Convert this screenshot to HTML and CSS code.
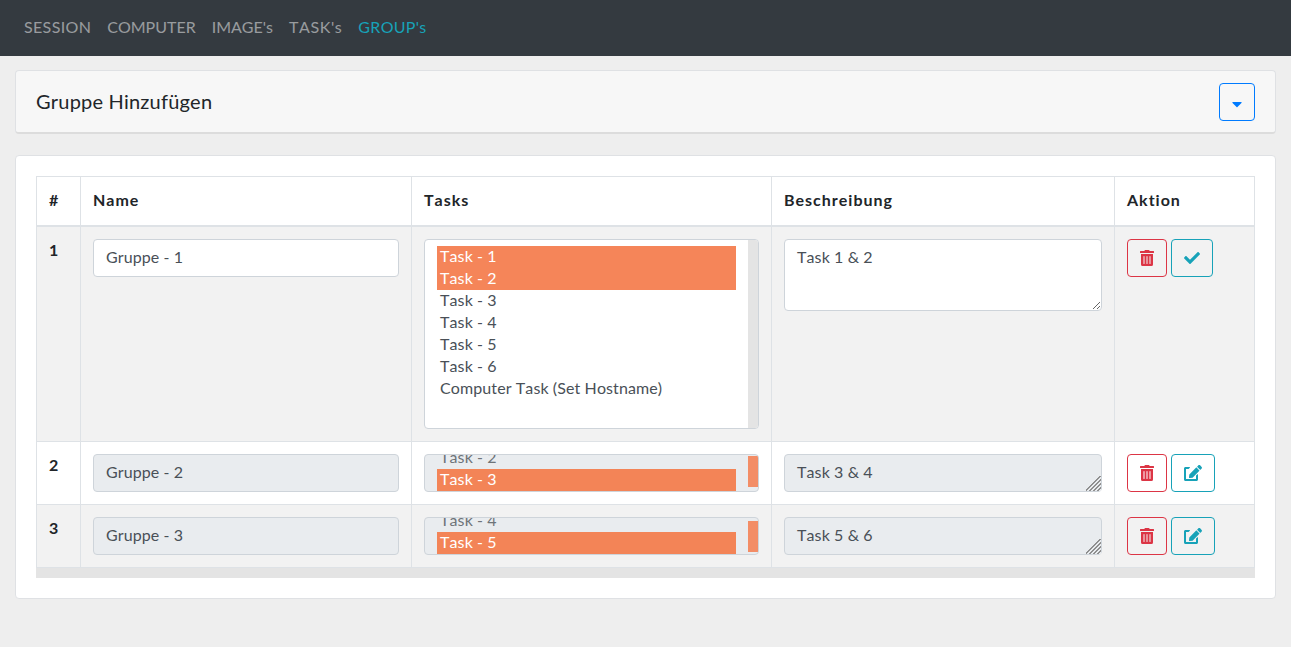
FILE: index.html
```html
<!DOCTYPE html>
<html lang="de">
<head>
<meta charset="utf-8">
<title>Gruppen</title>
<link rel="stylesheet" href="styles.css">
</head>
<body>
<nav class="navbar">
  <a class="nav-link nav-session" href="#">SESSION</a>
  <a class="nav-link" href="#">COMPUTER</a>
  <a class="nav-link" href="#">IMAGE's</a>
  <a class="nav-link nav-task" href="#">TASK's</a>
  <a class="nav-link nav-group active" href="#">GROUP's</a>
</nav>
<main class="content">
  <section class="card card-head">
    <h5 class="card-title">Gruppe Hinzufügen</h5>
    <button class="btn btn-blue btn-toggle" type="button" aria-label="Aufklappen">
      <svg class="icon-caret" viewBox="0 0 320 512"><path d="M31.3 192h257.3c17.8 0 26.7 21.5 14.1 34.1L174.1 354.8c-7.8 7.8-20.5 7.8-28.3 0L17.2 226.1C4.6 213.5 13.5 192 31.3 192z"/></svg>
    </button>
  </section>
  <section class="card card-body">
    <table class="table">
      <thead>
        <tr>
          <th class="col-num">#</th>
          <th class="col-name">Name</th>
          <th class="col-tasks">Tasks</th>
          <th class="col-desc">Beschreibung</th>
          <th class="col-act">Aktion</th>
        </tr>
      </thead>
      <tbody>
        <tr class="odd">
          <th>1</th>
          <td><input class="control" type="text" value="Gruppe - 1"></td>
          <td>
            <div class="listbox listbox-open">
              <ul class="options">
                <li class="sel">Task - 1</li>
                <li class="sel">Task - 2</li>
                <li>Task - 3</li>
                <li>Task - 4</li>
                <li>Task - 5</li>
                <li>Task - 6</li>
                <li>Computer Task (Set Hostname)</li>
              </ul>
              <div class="scrolltrack"></div>
            </div>
          </td>
          <td><textarea class="control area-open">Task 1 &amp; 2</textarea></td>
          <td class="actions">
            <button class="btn btn-red" type="button" aria-label="Löschen"><svg class="icon" viewBox="0 0 448 512"><path d="M32 464a48 48 0 0 0 48 48h288a48 48 0 0 0 48-48V128H32zm272-256a16 16 0 0 1 32 0v224a16 16 0 0 1-32 0zm-96 0a16 16 0 0 1 32 0v224a16 16 0 0 1-32 0zm-96 0a16 16 0 0 1 32 0v224a16 16 0 0 1-32 0zM432 32H312l-9.4-18.7A24 24 0 0 0 281.1 0H166.8a23.72 23.72 0 0 0-21.4 13.3L136 32H16A16 16 0 0 0 0 48v32a16 16 0 0 0 16 16h416a16 16 0 0 0 16-16V48a16 16 0 0 0-16-16z"/></svg></button>
            <button class="btn btn-teal btn-check" type="button" aria-label="Speichern"><svg class="icon" viewBox="0 0 512 512"><path d="M173.898 439.404l-166.4-166.4c-9.997-9.997-9.997-26.206 0-36.204l36.203-36.204c9.997-9.998 26.207-9.998 36.204 0L192 312.69 432.095 72.596c9.997-9.997 26.207-9.997 36.204 0l36.203 36.204c9.997 9.997 9.997 26.206 0 36.204l-294.4 294.401c-9.998 9.997-26.207 9.997-36.204-.001z"/></svg></button>
          </td>
        </tr>
        <tr>
          <th>2</th>
          <td><input class="control" type="text" value="Gruppe - 2" disabled></td>
          <td>
            <div class="listbox listbox-closed">
              <ul class="options">
                <li class="cut">Task - 2</li>
                <li class="sel">Task - 3</li>
              </ul>
              <div class="scrolltrack"><div class="thumb"></div></div>
            </div>
          </td>
          <td><textarea class="control area-closed" disabled>Task 3 &amp; 4</textarea></td>
          <td class="actions">
            <button class="btn btn-red" type="button" aria-label="Löschen"><svg class="icon" viewBox="0 0 448 512"><path d="M32 464a48 48 0 0 0 48 48h288a48 48 0 0 0 48-48V128H32zm272-256a16 16 0 0 1 32 0v224a16 16 0 0 1-32 0zm-96 0a16 16 0 0 1 32 0v224a16 16 0 0 1-32 0zm-96 0a16 16 0 0 1 32 0v224a16 16 0 0 1-32 0zM432 32H312l-9.4-18.7A24 24 0 0 0 281.1 0H166.8a23.72 23.72 0 0 0-21.4 13.3L136 32H16A16 16 0 0 0 0 48v32a16 16 0 0 0 16 16h416a16 16 0 0 0 16-16V48a16 16 0 0 0-16-16z"/></svg></button>
            <button class="btn btn-teal btn-edit" type="button" aria-label="Bearbeiten"><svg class="icon icon-edit" viewBox="0 0 576 512"><path d="M402.6 83.2l90.2 90.2c3.8 3.8 3.8 10 0 13.8L274.4 405.6l-92.8 10.3c-12.4 1.4-22.9-9.1-21.5-21.5l10.3-92.8L388.8 83.2c3.8-3.8 10-3.8 13.8 0zm162-22.9l-48.8-48.8c-15.2-15.2-39.9-15.2-55.2 0l-35.4 35.4c-3.8 3.8-3.8 10 0 13.8l90.2 90.2c3.8 3.8 10 3.8 13.8 0l35.4-35.4c15.2-15.3 15.2-40 0-55.2zM384 346.2V448H64V128h73.9c3.2 0 6.2-1.3 8.5-3.5l40-40c7.6-7.6 2.2-20.5-8.5-20.5H48C21.5 64 0 85.5 0 112v352c0 26.5 21.5 48 48 48h352c26.5 0 48-21.5 48-48V306.2c0-10.7-12.9-16-20.5-8.5l-40 40c-2.2 2.3-3.5 5.3-3.5 8.5z"/></svg></button>
          </td>
        </tr>
        <tr class="odd">
          <th>3</th>
          <td><input class="control" type="text" value="Gruppe - 3" disabled></td>
          <td>
            <div class="listbox listbox-closed">
              <ul class="options">
                <li class="cut">Task - 4</li>
                <li class="sel">Task - 5</li>
              </ul>
              <div class="scrolltrack"><div class="thumb thumb-low"></div></div>
            </div>
          </td>
          <td><textarea class="control area-closed" disabled>Task 5 &amp; 6</textarea></td>
          <td class="actions">
            <button class="btn btn-red" type="button" aria-label="Löschen"><svg class="icon" viewBox="0 0 448 512"><path d="M32 464a48 48 0 0 0 48 48h288a48 48 0 0 0 48-48V128H32zm272-256a16 16 0 0 1 32 0v224a16 16 0 0 1-32 0zm-96 0a16 16 0 0 1 32 0v224a16 16 0 0 1-32 0zm-96 0a16 16 0 0 1 32 0v224a16 16 0 0 1-32 0zM432 32H312l-9.4-18.7A24 24 0 0 0 281.1 0H166.8a23.72 23.72 0 0 0-21.4 13.3L136 32H16A16 16 0 0 0 0 48v32a16 16 0 0 0 16 16h416a16 16 0 0 0 16-16V48a16 16 0 0 0-16-16z"/></svg></button>
            <button class="btn btn-teal btn-edit" type="button" aria-label="Bearbeiten"><svg class="icon icon-edit" viewBox="0 0 576 512"><path d="M402.6 83.2l90.2 90.2c3.8 3.8 3.8 10 0 13.8L274.4 405.6l-92.8 10.3c-12.4 1.4-22.9-9.1-21.5-21.5l10.3-92.8L388.8 83.2c3.8-3.8 10-3.8 13.8 0zm162-22.9l-48.8-48.8c-15.2-15.2-39.9-15.2-55.2 0l-35.4 35.4c-3.8 3.8-3.8 10 0 13.8l90.2 90.2c3.8 3.8 10 3.8 13.8 0l35.4-35.4c15.2-15.3 15.2-40 0-55.2zM384 346.2V448H64V128h73.9c3.2 0 6.2-1.3 8.5-3.5l40-40c7.6-7.6 2.2-20.5-8.5-20.5H48C21.5 64 0 85.5 0 112v352c0 26.5 21.5 48 48 48h352c26.5 0 48-21.5 48-48V306.2c0-10.7-12.9-16-20.5-8.5l-40 40c-2.2 2.3-3.5 5.3-3.5 8.5z"/></svg></button>
          </td>
        </tr>
      </tbody>
    </table>
    <div class="hscroll"></div>
  </section>
</main>
</body>
</html>
```
FILE: styles.css
```css
* { box-sizing: border-box; }
html, body { height: 100%; }
body {
  margin: 0;
  background: #eeeeee;
  color: #212529;
  font-family: Lato, "Noto Sans", sans-serif;
  font-size: 16px;
  line-height: 22px;
  font-kerning: none;
  letter-spacing: 0.1px;
  overflow: hidden;
}
.navbar {
  display: flex;
  gap: 16px;
  align-items: center;
  height: 56px;
  padding: 0 24px 2px;
  background: #343a40;
}
.nav-link {
  color: rgba(255, 255, 255, 0.5);
  text-decoration: none;
  letter-spacing: 0;
}
.nav-session { letter-spacing: 0.35px; }
.nav-task { letter-spacing: 0.6px; }
.nav-group { letter-spacing: 0.3px; }
.nav-link.active { color: #17a2b8; }
.content {
  display: flex;
  flex-direction: column;
  gap: 21px;
  padding: 14px 15px 0;
}
.card {
  border: 1px solid #dfe1e4;
  border-radius: 4px;
}
.card-head {
  display: flex;
  align-items: center;
  justify-content: space-between;
  height: 64px;
  padding: 0 20px;
  background: #f7f7f7;
  border-bottom: 2px solid #dcdcdc;
}
.card-title {
  margin: 0 0 2px;
  font-size: 20px;
  font-weight: 400;
  line-height: 22px;
  letter-spacing: 0.2px;
}
.card-body {
  height: 444px;
  padding: 20px;
  background: #fff;
}
.btn {
  display: inline-flex;
  align-items: center;
  justify-content: center;
  height: 38px;
  padding: 0;
  background: transparent;
  border: 1px solid;
  border-radius: 4px;
}
.btn-blue { width: 36px; border-color: #007bff; color: #007bff; }
.btn-toggle { padding-top: 4px; }
.btn-red { width: 40px; border-color: #dc3545; color: #dc3545; }
.btn-teal { border-color: #17a2b8; color: #17a2b8; }
.btn-check { width: 42px; }
.btn-edit { width: 44px; }
.icon { display: block; height: 16px; fill: currentColor; }
.icon-caret { display: block; height: 16px; fill: currentColor; }
.table {
  width: 1219px;
  table-layout: fixed;
  border-collapse: collapse;
  color: #212529;
}
.col-num { width: 44px; }
.col-name { width: 331px; }
.col-tasks { width: 360px; }
.col-desc { width: 343px; }
.col-act { width: 140px; }
.table th, .table td {
  padding: 12px;
  border: 1px solid #dee2e6;
  vertical-align: top;
  text-align: left;
}
.table thead th {
  padding: 10px 12px 12px;
  height: 49px;
  vertical-align: middle;
  border-bottom: 2px solid #dee2e6;
  font-weight: 700;
  letter-spacing: 1px;
}
.table tbody th { font-weight: 700; }
.odd { background: #f2f2f2; }
.control {
  display: block;
  width: 100%;
  height: 38px;
  padding: 5px 12px 7px;
  color: #495057;
  background: #fff;
  border: 1px solid #ced4da;
  border-radius: 4px;
  font: inherit;
  letter-spacing: inherit;
}
.control:disabled { background: #e9ecef; opacity: 1; }
textarea.control { padding: 6px 12px; }
.area-open { height: 72px; }
.area-closed { height: 38px; }
.area-closed::-webkit-resizer {
  background:
    linear-gradient(135deg, #e9ecef 45%, transparent 45%),
    repeating-linear-gradient(135deg, #e9ecef 0 1.4px, #8f8f8f 1.4px 2.8px);
}
.listbox {
  display: flex;
  width: 100%;
  overflow: hidden;
  color: #495057;
  background: #fff;
  border: 1px solid #ced4da;
  border-radius: 4px;
}
.listbox-open { height: 190px; }
.listbox-closed { height: 38px; background: #e9ecef; color: #6e7479; }
.options {
  flex: 1;
  min-width: 0;
  margin: 0;
  padding: 6px 12px 0;
  list-style: none;
}
.options li { height: 22px; padding: 0 3px; line-height: 20px; white-space: nowrap; }
.options .sel { background: #f58559; color: #fff; }
.options .cut { margin-top: -14px; }
.listbox-closed .sel { background: #f38457; }
.scrolltrack { width: 10px; background: #e4e4e4; }
.listbox-closed .scrolltrack { background: transparent; padding-top: 1px; }
.thumb { height: 31px; background: #f38d66; }
.thumb-low { margin-top: 2px; }
.hscroll { height: 10px; background: #e4e4e4; }
.actions { white-space: nowrap; font-size: 0; line-height: 0; }
.actions .btn + .btn { margin-left: 4px; }
```
